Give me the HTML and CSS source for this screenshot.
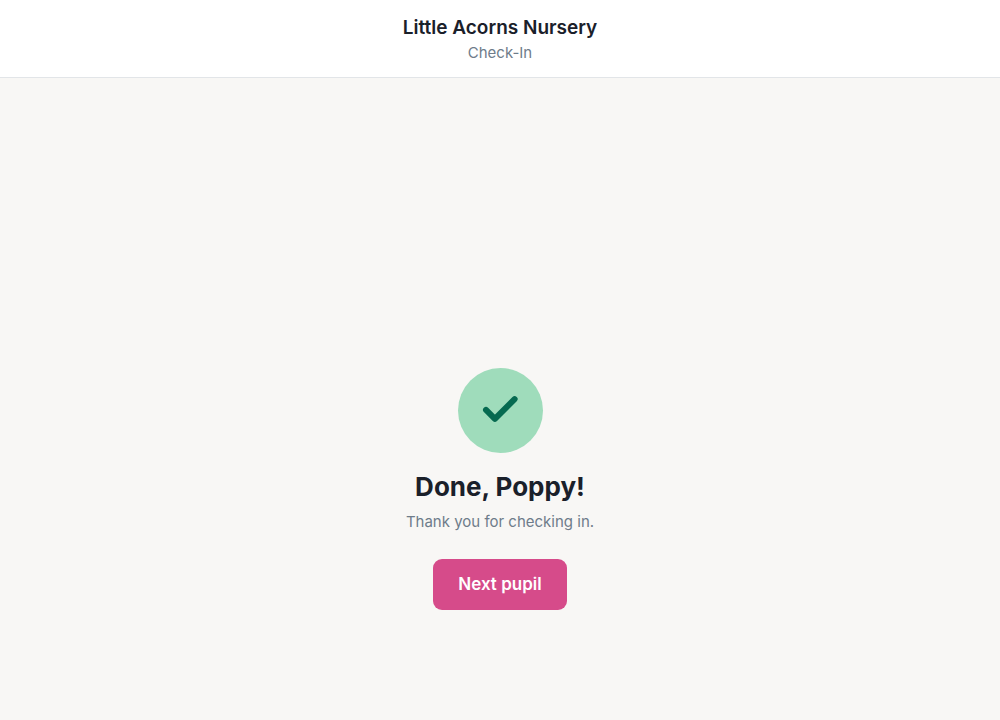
FILE: index.html
```html
<!DOCTYPE html>
<html lang="en">
<head>
<meta charset="utf-8">
<meta name="viewport" content="width=device-width, initial-scale=1">
<title>Little Acorns Nursery – Check-In</title>
<link rel="stylesheet" href="styles.css">
</head>
<body class="page">
<header class="header">
  <h1 class="header-title">Little Acorns Nursery</h1>
  <p class="header-subtitle">Check-In</p>
</header>
<main class="main">
  <div class="badge">
    <svg class="badge-icon" viewBox="0 0 43 43" fill="none" stroke="currentColor" stroke-width="6" stroke-linecap="round" stroke-linejoin="round" aria-hidden="true"><path d="M7 20.900 15.900 29.800 35.600 10.100"/></svg>
  </div>
  <h2 class="message-title">Done, Poppy!</h2>
  <p class="message-text">Thank you for checking in.</p>
  <button class="next-button" type="button">Next pupil</button>
</main>
</body>
</html>
```

FILE: styles.css
```css
* {
  box-sizing: border-box;
}

.page {
  display: flex;
  flex-direction: column;
  min-height: 100vh;
  margin: 0;
  background: #f8f7f5;
  color: #1a202a;
  font-family: Inter, "Liberation Sans", sans-serif;
}

.header {
  padding: 16px 16px 15px;
  border-bottom: 1px solid #e2e5e8;
  background: #fff;
  text-align: center;
}

.header-title {
  margin: 0;
  font-size: 19px;
  font-weight: 600;
  line-height: 23px;
}

.header-subtitle {
  margin: 5px 0 0;
  color: #6e7c8a;
  font-size: 15px;
  line-height: 18px;
}

.main {
  display: flex;
  flex: 1;
  flex-direction: column;
  align-items: center;
  justify-content: flex-end;
  padding: 32px 24px 110px;
  text-align: center;
}

.badge {
  display: flex;
  align-items: center;
  justify-content: center;
  width: 85px;
  height: 85px;
  border-radius: 50%;
  background: #9fdcbb;
  color: #066a50;
}

.badge-icon {
  width: 43px;
  height: 43px;
}

.message-title {
  margin: 18px 0 0;
  font-size: 26px;
  font-weight: 700;
  line-height: 32px;
}

.message-text {
  margin: 10px 0 0;
  color: #6e7c8a;
  font-size: 15px;
  line-height: 18px;
}

.next-button {
  margin-top: 28px;
  padding: 15px 25px;
  border: 0;
  border-radius: 9px;
  background: #d64b8a;
  color: #fff;
  font-family: inherit;
  font-size: 17px;
  font-weight: 600;
  line-height: 21px;
  cursor: pointer;
}
```
